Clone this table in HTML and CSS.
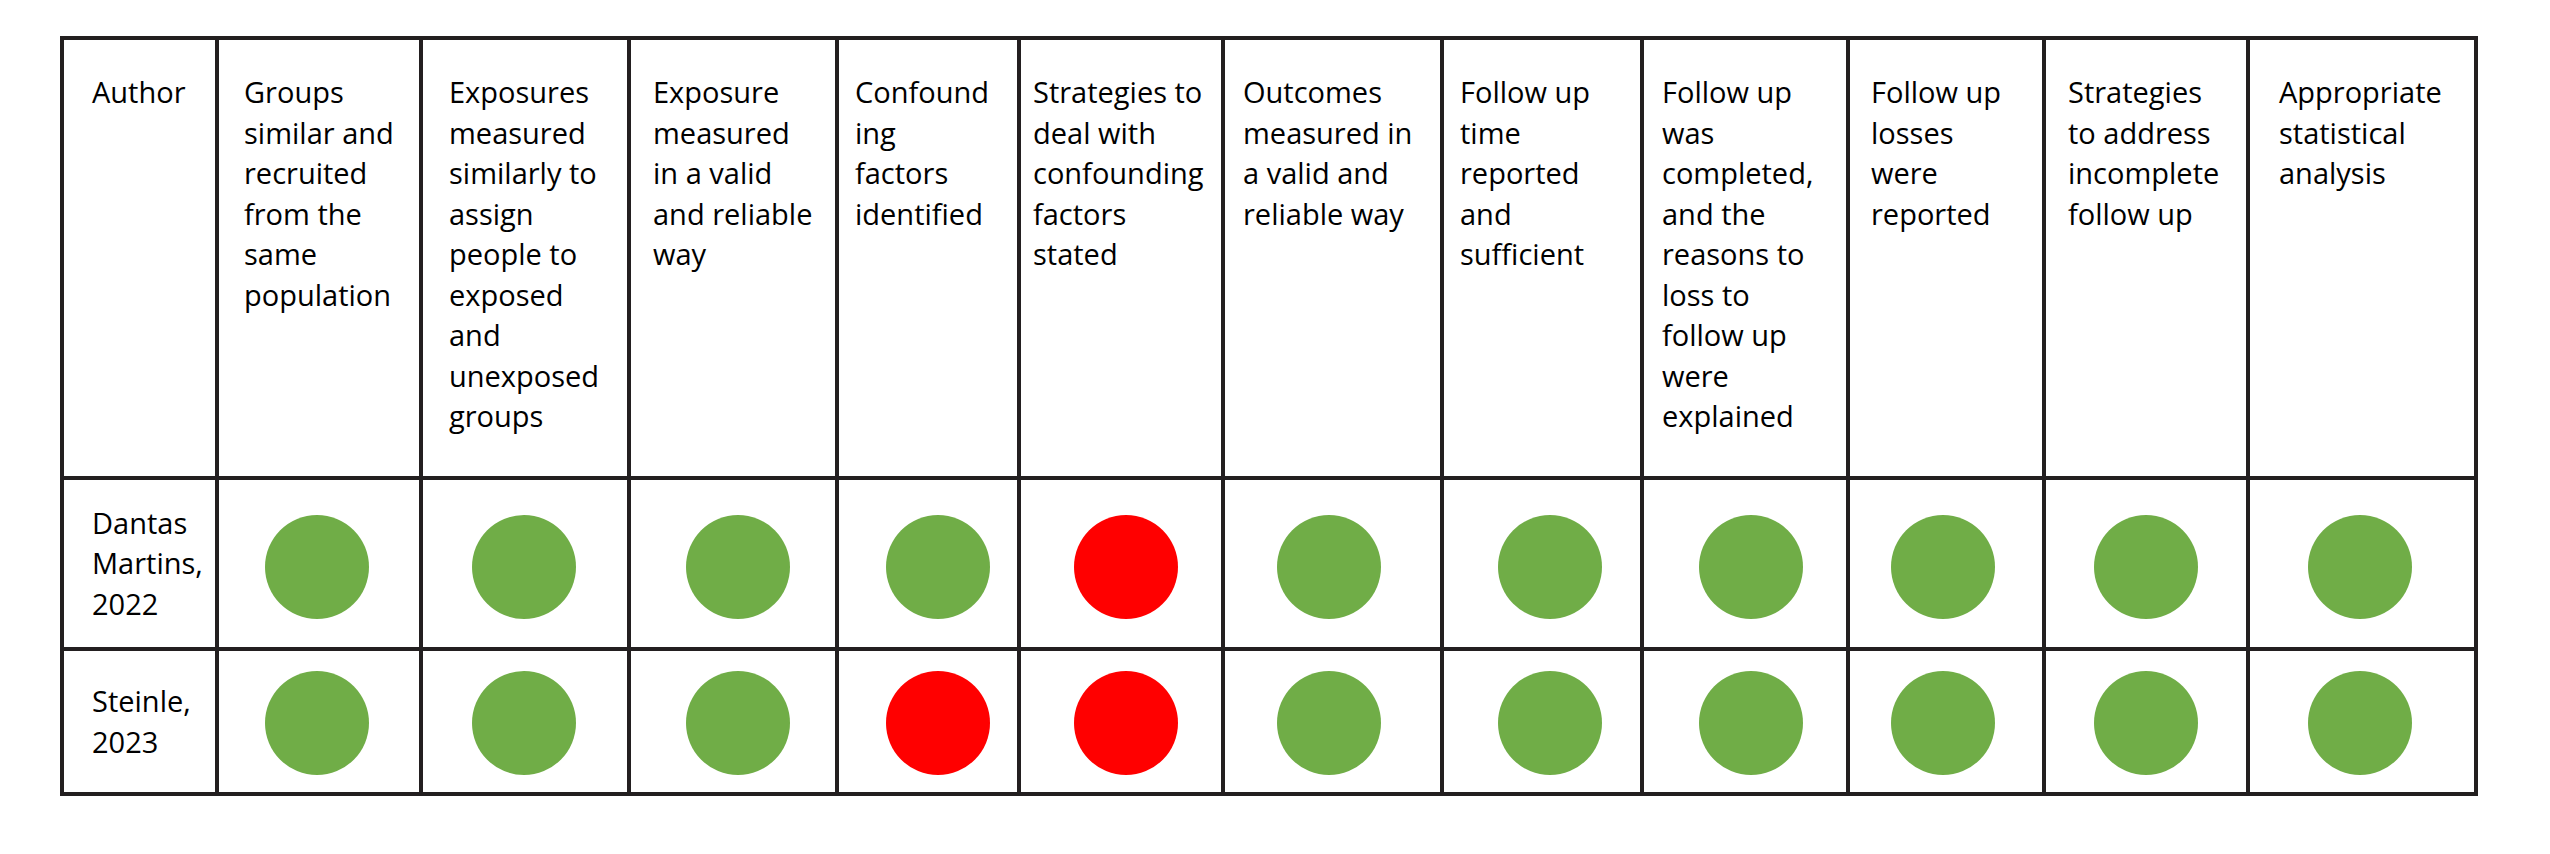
FILE: index.html
```html
<!DOCTYPE html>
<html lang="en">
<head>
<meta charset="utf-8">
<title>Risk of bias assessment</title>
<link rel="stylesheet" href="styles.css">
</head>
<body>
<div class="grid" role="table">
  <div class="cell head pl-28" role="columnheader">Author</div>
  <div class="cell head pl-25" role="columnheader">Groups<br>similar and<br>recruited<br>from the<br>same<br>population</div>
  <div class="cell head pl-26" role="columnheader">Exposures<br>measured<br>similarly to<br>assign<br>people to<br>exposed<br>and<br>unexposed<br>groups</div>
  <div class="cell head pl-22" role="columnheader">Exposure<br>measured<br>in a valid<br>and reliable<br>way</div>
  <div class="cell head pl-16" role="columnheader">Confound<br>ing<br>factors<br>identified</div>
  <div class="cell head pl-12" role="columnheader">Strategies to<br>deal with<br>confounding<br>factors<br>stated</div>
  <div class="cell head pl-18" role="columnheader">Outcomes<br>measured in<br>a valid and<br>reliable way</div>
  <div class="cell head pl-16" role="columnheader">Follow up<br>time<br>reported<br>and<br>sufficient</div>
  <div class="cell head pl-18" role="columnheader">Follow up<br>was<br>completed,<br>and the<br>reasons to<br>loss to<br>follow up<br>were<br>explained</div>
  <div class="cell head pl-21" role="columnheader">Follow up<br>losses<br>were<br>reported</div>
  <div class="cell head pl-22" role="columnheader">Strategies<br>to address<br>incomplete<br>follow up</div>
  <div class="cell head pl-29" role="columnheader">Appropriate<br>statistical<br>analysis</div>

  <div class="cell name r1" role="rowheader">Dantas<br>Martins,<br>2022</div>
  <div class="cell mark r1"><span class="dot ok sh-m2"></span></div>
  <div class="cell mark r1"><span class="dot ok sh-m1"></span></div>
  <div class="cell mark r1"><span class="dot ok sh-5"></span></div>
  <div class="cell mark r1"><span class="dot ok sh-10"></span></div>
  <div class="cell mark r1"><span class="dot bad sh-5"></span></div>
  <div class="cell mark r1"><span class="dot ok sh-m4"></span></div>
  <div class="cell mark r1"><span class="dot ok sh-8"></span></div>
  <div class="cell mark r1"><span class="dot ok sh-6"></span></div>
  <div class="cell mark r1"><span class="dot ok sh-m3"></span></div>
  <div class="cell mark r1"><span class="dot ok"></span></div>
  <div class="cell mark r1"><span class="dot ok sh-m2"></span></div>

  <div class="cell name r2" role="rowheader">Steinle,<br>2023</div>
  <div class="cell mark r2"><span class="dot ok sh-m2"></span></div>
  <div class="cell mark r2"><span class="dot ok sh-m1"></span></div>
  <div class="cell mark r2"><span class="dot ok sh-5"></span></div>
  <div class="cell mark r2"><span class="dot bad sh-10"></span></div>
  <div class="cell mark r2"><span class="dot bad sh-5"></span></div>
  <div class="cell mark r2"><span class="dot ok sh-m4"></span></div>
  <div class="cell mark r2"><span class="dot ok sh-8"></span></div>
  <div class="cell mark r2"><span class="dot ok sh-6"></span></div>
  <div class="cell mark r2"><span class="dot ok sh-m3"></span></div>
  <div class="cell mark r2"><span class="dot ok"></span></div>
  <div class="cell mark r2"><span class="dot ok sh-m2"></span></div>
</div>
</body>
</html>
```
FILE: styles.css
```css
html, body {
  margin: 0;
  padding: 0;
  background: #ffffff;
}

body {
  font-family: "Open Sans", "Noto Sans", "Liberation Sans", sans-serif;
  font-size: 29px;
  line-height: 40.5px;
  color: #000000;
}

.grid {
  display: grid;
  width: max-content;
  margin: 36px 0 0 60px;
  padding: 4px;
  gap: 4px;
  background: #231f20;
  grid-template-columns: 151px 200px 204px 204px 178px 200px 215px 196px 202px 192px 200px 224px;
  grid-template-rows: 436px 167px 141px;
}

.cell {
  background: #ffffff;
  white-space: nowrap;
}

.head {
  text-align: left;
  padding-top: 32px;
}

.pl-12 { padding-left: 12px; }
.pl-16 { padding-left: 16px; }
.pl-18 { padding-left: 18px; }
.pl-21 { padding-left: 21px; }
.pl-22 { padding-left: 22px; }
.pl-25 { padding-left: 25px; }
.pl-26 { padding-left: 26px; }
.pl-28 { padding-left: 28px; }
.pl-29 { padding-left: 29px; }

.name {
  display: flex;
  align-items: center;
  padding-left: 28px;
}

.mark {
  display: flex;
  justify-content: center;
  align-items: center;
}

.dot {
  display: block;
  width: 104px;
  height: 104px;
  border-radius: 50%;
}

.r1 .dot { margin-top: 6px; }
.r2 .dot { margin-top: 2px; }

.ok { background: #70ad47; }
.bad { background: #ff0000; }

.sh-m4 { margin-right: 8px; }
.sh-m3 { margin-right: 6px; }
.sh-m2 { margin-right: 4px; }
.sh-m1 { margin-right: 2px; }
.sh-5 { margin-left: 10px; }
.sh-6 { margin-left: 12px; }
.sh-8 { margin-left: 16px; }
.sh-10 { margin-left: 20px; }
```
